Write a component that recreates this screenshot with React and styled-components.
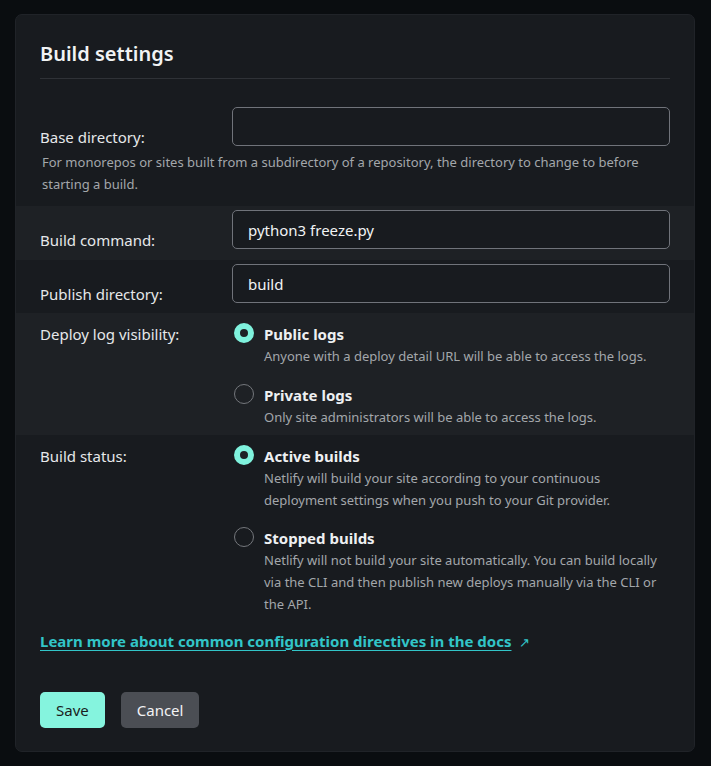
import React from 'react'
import styled, { createGlobalStyle } from 'styled-components'

const GlobalStyle = createGlobalStyle`
body {
  margin: 0;
  background: #0a0d10;
  font-family: "Noto Sans", "Open Sans", sans-serif;
  color: #e6e8ea;
}
`

const Page = styled.div`
padding: 14px 16px 14px 15px;
`
const Card = styled.section`
background: #181b1f;
border: 1px solid #202328;
border-radius: 7px;
padding: 0 24px 23px 24px;
`
const Header = styled.div`
padding-top: 24px;
padding-bottom: 9px;
border-bottom: 1px solid #2f3237;
`
const Title = styled.h2`
margin: 0;
font-size: 20px;
line-height: 30px;
font-weight: 600;
color: #f1f3f4;
`
const Band = styled.div`
margin: 0 -24px;
padding: ${p => p.pad || '4px 24px 10px'};
background: ${p => (p.shade ? '#1e2125' : 'transparent')};
`
const Field = styled.div`
display: grid;
grid-template-columns: 192px 1fr;
align-items: start;
`
const Label = styled.label`
font-size: 15px;
line-height: 22px;
padding-top: ${p => p.top ?? 19}px;
margin-bottom: ${p => (p.top === 0 ? 0 : -2)}px;
color: #e6e8ea;
`
const Input = styled.input`
box-sizing: border-box;
width: 100%;
height: 39px;
padding: 0 15px;
background: #181b1f;
border: 1px solid #70737a;
border-radius: 5px;
color: #f1f3f4;
font-family: inherit;
font-size: 15px;
outline: none;
`
const Help = styled.p`
margin: 5px 0 0 2px;
font-size: 13px;
line-height: 22px;
color: #a3a7ab;
`
const Options = styled.div`
display: flex;
flex-direction: column;
gap: ${p => p.gap ?? 17}px;
`
const Option = styled.div`
display: flex;
align-items: flex-start;
gap: 10px;
padding-left: 2px;
`
const Radio = styled.span`
flex: none;
box-sizing: border-box;
width: 20px;
height: 20px;
border-radius: 50%;
border: ${p => (p.checked ? '6px solid #7ff2dd' : '1px solid #74777c')};
background: ${p => (p.checked ? '#1e2125' : 'transparent')};
`
const OptionText = styled.div`
display: flex;
flex-direction: column;
`
const OptionTitle = styled.span`
font-size: 15px;
line-height: 22px;
font-weight: 700;
color: #eef0f2;
`
const OptionDesc = styled.span`
font-size: 13px;
line-height: 22px;
color: #a3a7ab;
`
const DocsLine = styled.p`
margin: 8px 0 0;
font-size: 15px;
line-height: 22px;
`
const DocsLink = styled.a`
color: #32c5c8;
font-weight: 700;
text-decoration: underline;
text-underline-offset: 3px;
`
const Arrow = styled.span`
margin-left: 7px;
color: #32c5c8;
font-size: 13px;
`
const Actions = styled.div`
display: flex;
gap: 16px;
margin-top: 39px;
`
const Button = styled.button`
height: 36px;
padding: 0 16px;
border: 0;
border-radius: 5px;
font-family: inherit;
font-size: 15px;
background: ${p => (p.primary ? '#85f4de' : '#4b4e54')};
color: ${p => (p.primary ? '#1a1d21' : '#f2f3f4')};
`

const Choice = ({ checked, title, children }) => (
  <Option>
    <Radio checked={checked} />
    <OptionText>
      <OptionTitle>{title}</OptionTitle>
      <OptionDesc>{children}</OptionDesc>
    </OptionText>
  </Option>
)

export default function App() {
  return (
    <Page>
      <GlobalStyle />
      <Card>
        <Header>
          <Title>Build settings</Title>
        </Header>

        <Band pad="28px 24px 11px">
          <Field>
            <Label>Base directory:</Label>
            <Input type="text" defaultValue="" />
          </Field>
          <Help>
            For monorepos or sites built from a subdirectory of a repository, the directory to change to before starting a build.
          </Help>
        </Band>

        <Band shade pad="4px 24px 11px">
          <Field>
            <Label>Build command:</Label>
            <Input type="text" defaultValue="python3 freeze.py" />
          </Field>
        </Band>

        <Band>
          <Field>
            <Label>Publish directory:</Label>
            <Input type="text" defaultValue="build" />
          </Field>
        </Band>

        <Band shade pad="10px 24px 7px">
          <Field>
            <Label top={0}>Deploy log visibility:</Label>
            <Options>
              <Choice checked title="Public logs">
                Anyone with a deploy detail URL will be able to access the logs.
              </Choice>
              <Choice title="Private logs">
                Only site administrators will be able to access the logs.
              </Choice>
            </Options>
          </Field>
        </Band>

        <Band pad="10px 24px 7px">
          <Field>
            <Label top={0}>Build status:</Label>
            <Options gap={16}>
              <Choice checked title="Active builds">
                Netlify will build your site according to your continuous deployment settings when you push to your Git provider.
              </Choice>
              <Choice title="Stopped builds">
                Netlify will not build your site automatically. You can build locally via the CLI and then publish new deploys manually via the CLI or the API.
              </Choice>
            </Options>
          </Field>
        </Band>

        <DocsLine>
          <DocsLink href="#">Learn more about common configuration directives in the docs</DocsLink>
          <Arrow>↗</Arrow>
        </DocsLine>

        <Actions>
          <Button primary>Save</Button>
          <Button>Cancel</Button>
        </Actions>
      </Card>
    </Page>
  )
}
